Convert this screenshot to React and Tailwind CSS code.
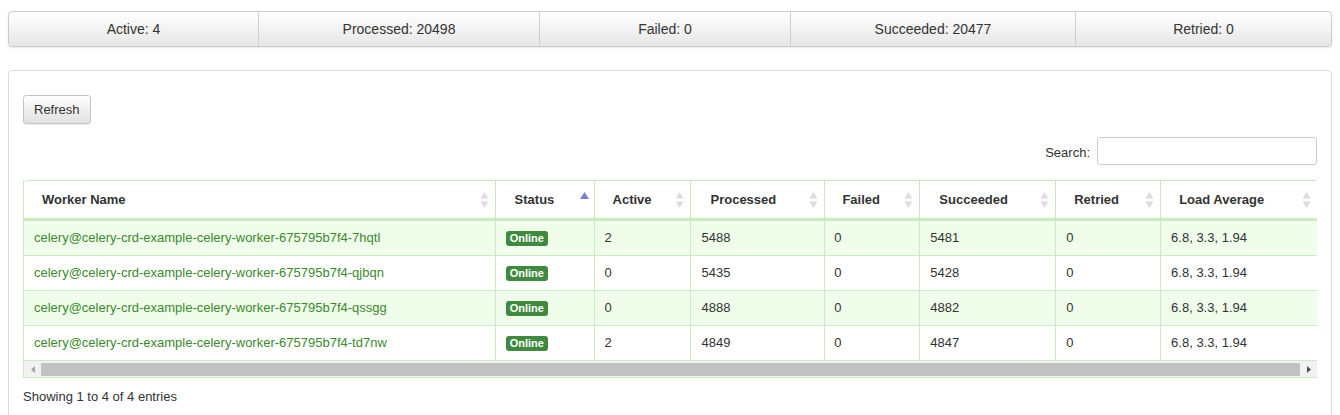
import React from "react";

const stats = [
  ["Active: 4", "w-[250px]"],
  ["Processed: 20498", "w-[281px]"],
  ["Failed: 0", "w-[251px]"],
  ["Succeeded: 20477", "w-[285px]"],
  ["Retried: 0", "flex-1"],
];

const cols = [
  ["Worker Name", "w-[472px]", "pl-[18px]"],
  ["Status", "w-[99px]", "pl-[19px]"],
  ["Active", "w-[97px]", "pl-[18px]"],
  ["Processed", "w-[134px]", "pl-[19px]"],
  ["Failed", "w-[95px]", "pl-[17px]"],
  ["Succeeded", "w-[136px]", "pl-[19px]"],
  ["Retried", "w-[105px]", "pl-[18px]"],
  ["Load Average", "w-[156px]", "pl-[18px]"],
];

const rows = [
  ["7hqtl", "2", "5488", "0", "5481", "0"],
  ["qjbqn", "0", "5435", "0", "5428", "0"],
  ["qssgg", "0", "4888", "0", "4882", "0"],
  ["td7nw", "2", "4849", "0", "4847", "0"],
];

function SortIcon({ active }) {
  if (active) {
    return (
      <svg width="9" height="8" viewBox="0 0 9 8" className="absolute right-[5px] top-[11px]">
        <path d="M4.5 0 L9 7 L0 7 Z" fill="#7b7fdc" />
      </svg>
    );
  }
  return (
    <svg width="9" height="16" viewBox="0 0 9 16" className="absolute right-[6px] top-[11px]">
      <path d="M4.5 0 L8.5 6.5 L0.5 6.5 Z" fill="#dcdcdc" />
      <path d="M4.5 16 L8.5 9.5 L0.5 9.5 Z" fill="#dcdcdc" />
    </svg>
  );
}

export default function App() {
  const font = { fontFamily: '"Liberation Sans", Arial, sans-serif' };
  return (
    <div className="w-[1340px] h-[415px] bg-white text-[#333] overflow-hidden" style={font}>
      <div className="pt-[11px] px-[8px]">
        <div className="flex h-[36px] rounded-[4px] border border-[#ccc] bg-gradient-to-b from-white to-[#e6e6e6] shadow-[0_1px_2px_rgba(0,0,0,0.1)] overflow-hidden">
          {stats.map(([t, w], i) => (
            <div
              key={i}
              className={`${w} flex items-center justify-center text-[14px] text-[#333] ${i < 4 ? "border-r border-[#d0d0d0]" : ""}`}
            >
              {t}
            </div>
          ))}
        </div>
      </div>

      <div className="mt-[23px] mx-[8px] border border-[#ddd] rounded-t-[4px] h-[400px] pt-[24px] px-[14px]">
        <button className="h-[29px] px-[10px] text-[13px] text-[#333] rounded-[3px] border border-[#c5c5c5] bg-gradient-to-b from-white to-[#e0e0e0] shadow-[0_1px_1px_rgba(0,0,0,0.08)]">
          Refresh
        </button>

        <div className="flex justify-end items-center mt-[12px] h-[29px]">
          <span className="text-[13px] mr-[7px] mt-[4px]">Search:</span>
          <div className="w-[220px] h-[28px] border border-[#ccc] rounded-[3px]" />
        </div>

        <div className="mt-[15px] w-[1294px] overflow-hidden border-l border-[#c8ecbd] border-r-0">
          <div className="flex border-t border-[#c8ecbd] h-[41px] border-b-[3px] border-b-[#c8ecbd] bg-white rounded-tl-[3px]">
            {cols.map(([t, w, p], i) => (
              <div
                key={i}
                className={`${w} ${p} relative flex items-center text-[13px] font-bold text-[#333] ${i < cols.length - 1 ? "border-r border-[#c8ecbd]" : ""}`}
              >
                {t}
                <SortIcon active={i === 1} />
              </div>
            ))}
          </div>
          {rows.map((r, ri) => (
            <div
              key={ri}
              className={`flex h-[35px] border-b border-[#c8ecbd] text-[13px] ${ri % 2 === 0 ? "bg-[#effdea]" : "bg-white"}`}
            >
              <div className="w-[472px] pl-[10px] flex items-center border-r border-[#c8ecbd] text-[#3b8a2e]">
                celery@celery-crd-example-celery-worker-675795b7f4-{r[0]}
              </div>
              <div className="w-[99px] pl-[10px] flex items-center border-r border-[#c8ecbd]">
                <span className="bg-[#3f8a3f] text-white text-[11px] font-bold leading-none px-[4px] py-[2px] rounded-[3px]">
                  Online
                </span>
              </div>
              <div className="w-[97px] pl-[10px] flex items-center border-r border-[#c8ecbd]">{r[1]}</div>
              <div className="w-[134px] pl-[10px] flex items-center border-r border-[#c8ecbd]">{r[2]}</div>
              <div className="w-[95px] pl-[9px] flex items-center border-r border-[#c8ecbd]">{r[3]}</div>
              <div className="w-[136px] pl-[10px] flex items-center border-r border-[#c8ecbd]">{r[4]}</div>
              <div className="w-[105px] pl-[10px] flex items-center border-r border-[#c8ecbd]">{r[5]}</div>
              <div className="w-[156px] pl-[10px] flex items-center">6.8, 3.3, 1.94</div>
            </div>
          ))}
          <div className="flex h-[17px] bg-[#f1f1f1] items-center border-b border-[#c8ecbd]">
            <div className="w-[17px] h-full flex items-center justify-center">
              <svg width="4" height="7" viewBox="0 0 4 7"><path d="M4 0 L0 3.5 L4 7 Z" fill="#a3a3a3" /></svg>
            </div>
            <div className="flex-1 h-[13px] bg-[#c1c1c1]" />
            <div className="w-[17px] h-full flex items-center justify-center">
              <svg width="4" height="7" viewBox="0 0 4 7"><path d="M0 0 L4 3.5 L0 7 Z" fill="#505050" /></svg>
            </div>
          </div>
        </div>

        <div className="mt-[9px] text-[13px] text-[#333]">Showing 1 to 4 of 4 entries</div>
      </div>
    </div>
  );
}
